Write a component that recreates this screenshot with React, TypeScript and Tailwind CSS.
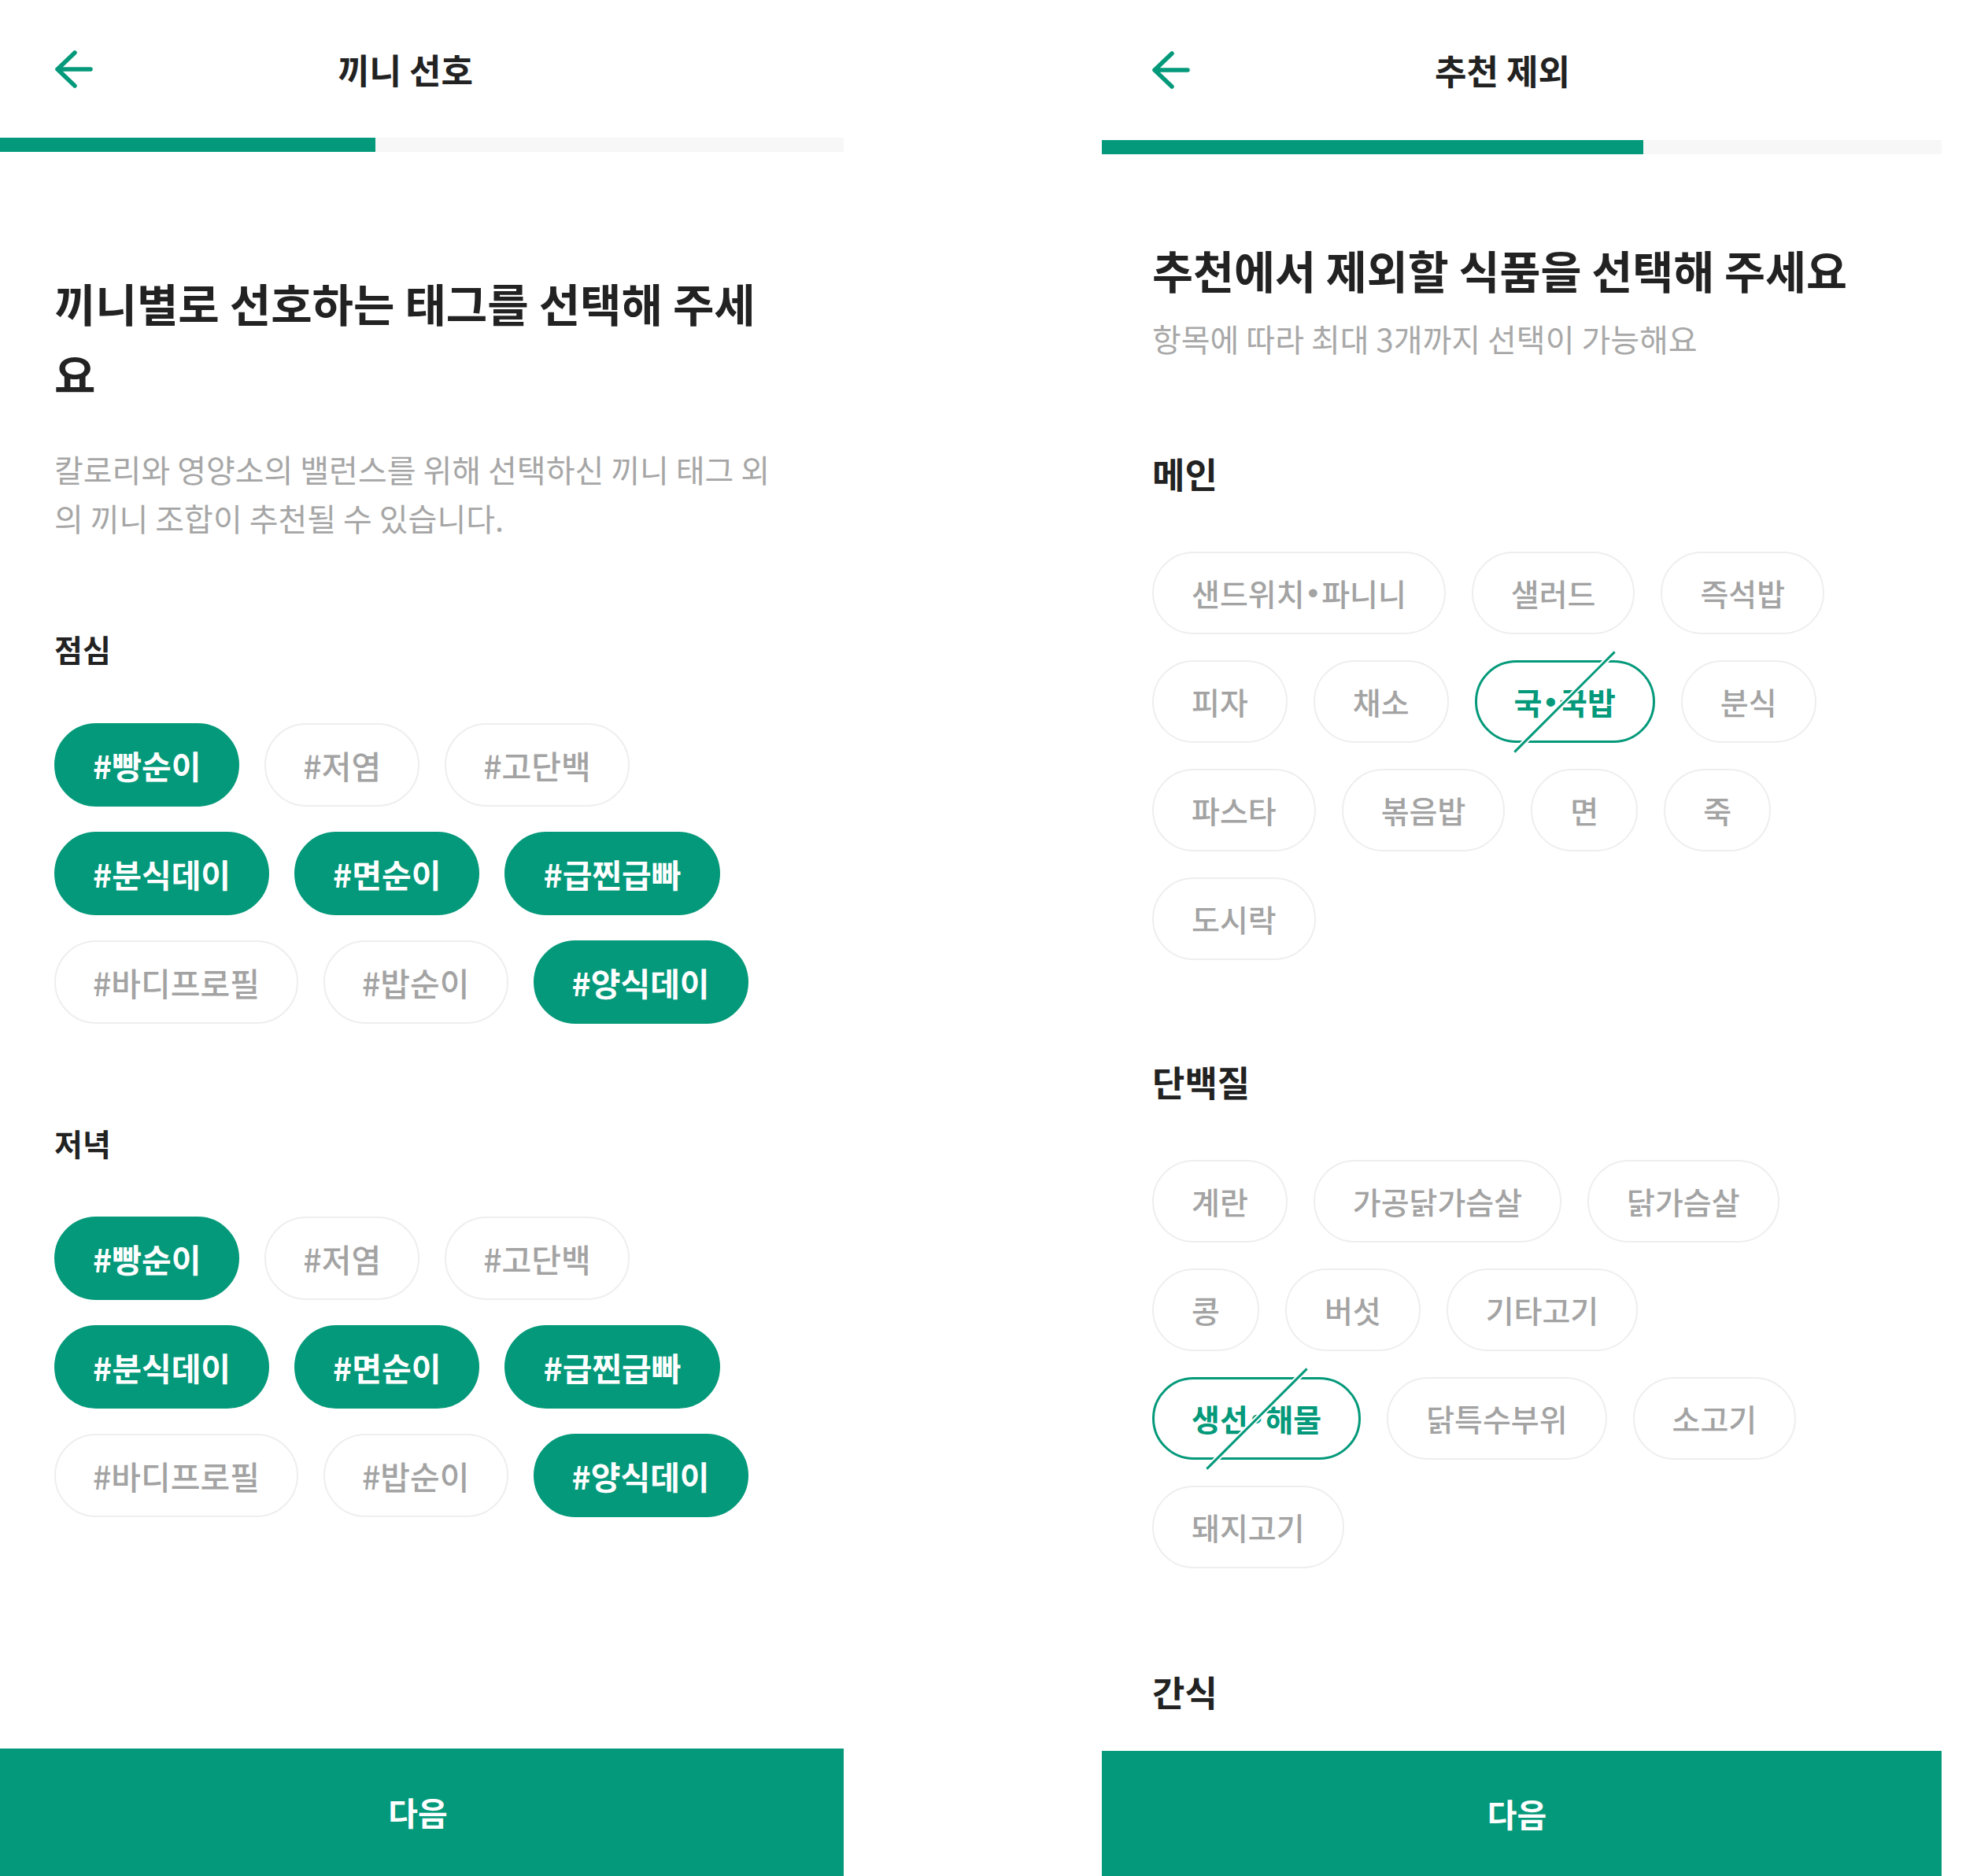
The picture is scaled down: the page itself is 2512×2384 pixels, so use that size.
import { Fragment } from 'react'

type Tag = { label: string; on?: boolean }

const mealTags: Tag[] = [
  { label: '#빵순이', on: true },
  { label: '#저염' },
  { label: '#고단백' },
  { label: '#분식데이', on: true },
  { label: '#면순이', on: true },
  { label: '#급찐급빠', on: true },
  { label: '#바디프로필' },
  { label: '#밥순이' },
  { label: '#양식데이', on: true },
]

const mainFoods: Tag[] = [
  { label: '샌드위치•파니니' },
  { label: '샐러드' },
  { label: '즉석밥' },
  { label: '피자' },
  { label: '채소' },
  { label: '국•국밥', on: true },
  { label: '분식' },
  { label: '파스타' },
  { label: '볶음밥' },
  { label: '면' },
  { label: '죽' },
  { label: '도시락' },
]

const proteinFoods: Tag[] = [
  { label: '계란' },
  { label: '가공닭가슴살' },
  { label: '닭가슴살' },
  { label: '콩' },
  { label: '버섯' },
  { label: '기타고기' },
  { label: '생선•해물', on: true },
  { label: '닭특수부위' },
  { label: '소고기' },
  { label: '돼지고기' },
]

function BackArrow() {
  return (
    <svg width="56" height="56" viewBox="0 0 56 56" fill="none" className="shrink-0">
      <path
        d="M7 28H49M29 7L7 28L29 49"
        stroke="#04997a"
        strokeWidth="5.5"
        strokeLinecap="round"
        strokeLinejoin="round"
      />
    </svg>
  )
}

// splits "국•국밥" so the bullet gets a narrow latin glyph
function Label({ text }: { text: string }) {
  const parts = text.split('•')
  return (
    <>
      {parts.map((p, i) => (
        <Fragment key={i}>
          {i > 0 && <span className="px-[4px] font-['Liberation_Sans',sans-serif]">•</span>}
          {p}
        </Fragment>
      ))}
    </>
  )
}

function MealChip({ tag }: { tag: Tag }) {
  return (
    <div
      className={`flex h-[106px] items-center rounded-full border-2 px-[47px] text-[41px] leading-none ${
        tag.on
          ? 'border-[#04997a] bg-[#04997a] font-semibold text-white'
          : 'border-[#eeeeee] bg-white font-medium text-[#a3a3a3]'
      }`}
    >
      {tag.label}
    </div>
  )
}

function FoodChip({ tag }: { tag: Tag }) {
  if (tag.on) {
    return (
      <div className="relative flex h-[105px] items-center rounded-full border-[3px] border-[#04997a] px-[47px] text-[39px] font-semibold leading-none text-[#04997a]">
        <Label text={tag.label} />
        {/* strike-through mark for excluded items */}
        <div className="absolute left-1/2 top-1/2 h-[3px] w-[180px] -translate-x-1/2 -translate-y-1/2 -rotate-45 bg-[#04997a] shadow-[0_0_0_2px_white]" />
      </div>
    )
  }
  return (
    <div className="flex h-[105px] items-center rounded-full border-2 border-[#eeeeee] px-[48px] text-[39px] font-medium leading-none text-[#a3a3a3]">
      <Label text={tag.label} />
    </div>
  )
}

function MealPreferenceScreen() {
  return (
    <div className="flex h-[2384px] w-[1072px] shrink-0 flex-col overflow-hidden bg-white">
      <header className="flex h-[175px] items-center pl-[66px] pr-[164px]">
        <BackArrow />
        <h1 className="flex-1 text-center text-[44px] font-bold text-[#222222]">끼니 선호</h1>
      </header>
      <div className="h-[18px] bg-[#f7f7f7]">
        <div className="h-full w-[477px] bg-[#04997a]" />
      </div>

      <main className="flex-1 px-[69px]">
        <h2 className="mt-[146px] w-[920px] text-[57px] font-bold leading-[90px] text-[#222222]">
          끼니별로 선호하는 태그를 선택해 주세요
        </h2>
        <p className="mt-[46px] text-[40px] leading-[62px] text-[#a6a6a6]">
          칼로리와 영양소의 밸런스를 위해 선택하신 끼니 태그 외의 끼니 조합이 추천될 수 있습니다.
        </p>

        <h3 className="mt-[110px] text-[39px] font-bold leading-[50px] text-[#222222]">점심</h3>
        <div className="mt-[70px] flex flex-wrap gap-[32px]">
          {mealTags.map((t) => (
            <MealChip key={t.label} tag={t} />
          ))}
        </div>

        <h3 className="mt-[126px] text-[39px] font-bold leading-[50px] text-[#222222]">저녁</h3>
        <div className="mt-[69px] flex flex-wrap gap-[32px]">
          {mealTags.map((t) => (
            <MealChip key={t.label} tag={t} />
          ))}
        </div>
      </main>

      <button className="flex h-[162px] w-full shrink-0 items-center justify-center bg-[#04997a] pr-[10px] text-[41px] font-bold text-white">
        다음
      </button>
    </div>
  )
}

function ExcludeScreen() {
  return (
    <div className="flex h-[2384px] w-[1067px] shrink-0 flex-col overflow-hidden bg-white">
      <header className="flex h-[178px] items-center pl-[60px] pr-[165px]">
        <BackArrow />
        <h1 className="flex-1 text-center text-[44px] font-bold text-[#222222]">추천 제외</h1>
      </header>
      <div className="h-[18px] bg-[#f7f7f7]">
        <div className="h-full w-[688px] bg-[#04997a]" />
      </div>

      <main className="flex-1 overflow-hidden px-[64px]">
        <h2 className="mt-[111px] whitespace-nowrap text-[56.5px] font-bold leading-[70px] text-[#222222]">
          추천에서 제외할 식품을 선택해 주세요
        </h2>
        <p className="mt-[27px] text-[40px] leading-[52px] text-[#a8a8a8]">
          항목에 따라 최대 3개까지 선택이 가능해요
        </p>

        <h3 className="mt-[118px] text-[45px] font-bold leading-[56px] text-[#222222]">메인</h3>
        <div className="mt-[71px] flex flex-wrap gap-[33px] pr-[40px]">
          {mainFoods.map((t) => (
            <FoodChip key={t.label} tag={t} />
          ))}
        </div>

        <h3 className="mt-[127px] text-[45px] font-bold leading-[56px] text-[#222222]">단백질</h3>
        <div className="mt-[71px] flex flex-wrap gap-[33px] pr-[40px]">
          {proteinFoods.map((t) => (
            <FoodChip key={t.label} tag={t} />
          ))}
        </div>

        <h3 className="mt-[129px] text-[45px] font-bold leading-[56px] text-[#222222]">간식</h3>
      </main>

      <button className="flex h-[159px] w-full shrink-0 items-center justify-center bg-[#04997a] pr-[12px] text-[41px] font-bold text-white">
        다음
      </button>
    </div>
  )
}

export default function App() {
  return (
    <div className="flex h-[2384px] w-[2512px] gap-[328px] overflow-hidden bg-white font-['Noto_Sans_CJK_KR',sans-serif]">
      <MealPreferenceScreen />
      <ExcludeScreen />
    </div>
  )
}
